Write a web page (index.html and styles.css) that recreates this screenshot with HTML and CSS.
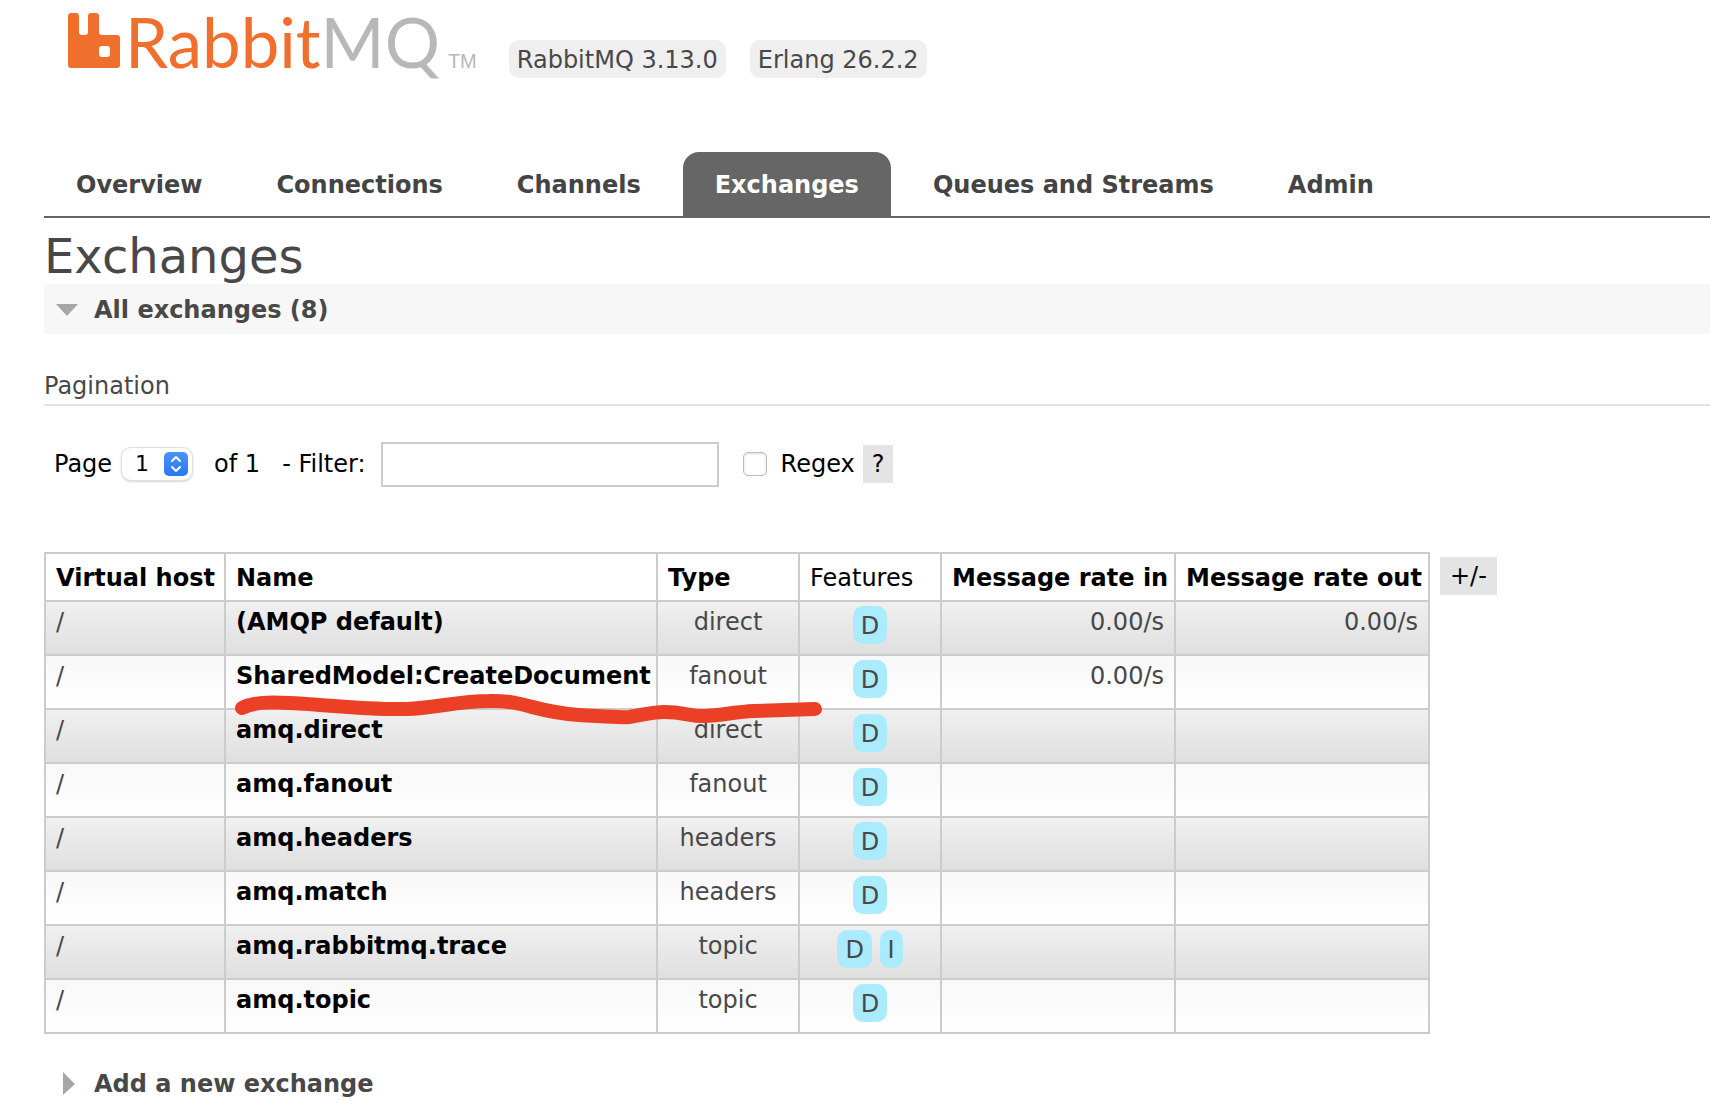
FILE: index.html
```html
<!DOCTYPE html>
<html lang="en">
<head>
<meta charset="utf-8">
<title>RabbitMQ Management</title>
<link rel="stylesheet" href="styles.css">
</head>
<body>
<header class="header">
  <a class="logo" href="#">
    <svg class="logo-mark" viewBox="0 0 52 55" aria-hidden="true"><path fill="#f06f2c" fill-rule="evenodd" d="M3 0H8Q11 0 11 3V19Q11 22 14 22H17Q20 22 20 19V3Q20 0 23 0H28Q31 0 31 3V19Q31 22 34 22H49Q52 22 52 25V52Q52 55 49 55H3Q0 55 0 52V3Q0 0 3 0ZM34 33Q31 33 31 36V41Q31 44 34 44H39Q42 44 42 41V36Q42 33 39 33Z"/></svg>
    <span class="logo-word">Rabbit<span class="logo-mq">MQ</span></span>
    <span class="logo-tm">TM</span>
  </a>
  <div class="versions"><span class="version">RabbitMQ 3.13.0</span><span class="version">Erlang 26.2.2</span></div>
</header>
<nav class="tabs">
  <a class="tab" href="#">Overview</a>
  <a class="tab" href="#">Connections</a>
  <a class="tab" href="#">Channels</a>
  <a class="tab tab-active" href="#">Exchanges</a>
  <a class="tab" href="#">Queues and Streams</a>
  <a class="tab" href="#">Admin</a>
</nav>
<main class="main">
  <h1 class="title">Exchanges</h1>
  <h2 class="section section-open"><svg class="arrow" viewBox="0 0 24 24" aria-hidden="true"><path fill="#a6a6a6" d="M1 6H23L12 18Z"/></svg>All exchanges (8)</h2>
  <h3 class="subhead">Pagination</h3>
  <form class="pager">
    <label for="page">Page</label>
    <span class="picker">
      <select class="page-select" id="page"><option>1</option></select>
      <svg class="picker-icon" viewBox="0 0 24 24" aria-hidden="true"><defs><linearGradient id="blue" x2="0" y2="1"><stop stop-color="#4794fb"/><stop offset="1" stop-color="#2a76f6"/></linearGradient></defs><rect width="24" height="24" rx="5" fill="url(#blue)"/><path d="M8 9L12 5L16 9M8 15L12 19L16 15" fill="none" stroke="#fff" stroke-width="2" stroke-linecap="round" stroke-linejoin="round"/></svg>
    </span>
    <span class="page-count">of 1</span>
    <label class="filter-label" for="filter">- Filter:</label>
    <input class="filter" id="filter" type="text">
    <input class="regex" id="regex" type="checkbox">
    <label class="regex-label" for="regex">Regex</label>
    <button class="chip" type="button">?</button>
  </form>
  <div class="listing">
    <table class="exchanges">
      <colgroup><col class="col-host"><col class="col-name"><col class="col-small"><col class="col-small"><col class="col-in"><col class="col-out"></colgroup>
      <thead><tr><th>Virtual host</th><th>Name</th><th>Type</th><th class="plain">Features</th><th>Message rate in</th><th>Message rate out</th></tr></thead>
      <tbody>
        <tr><td>/</td><td><a class="name" href="#">(AMQP default)</a></td><td class="center">direct</td><td class="flags"><span class="flag">D</span></td><td class="rate">0.00/s</td><td class="rate">0.00/s</td></tr>
        <tr><td>/</td><td><a class="name" href="#">SharedModel:CreateDocument</a></td><td class="center">fanout</td><td class="flags"><span class="flag">D</span></td><td class="rate">0.00/s</td><td></td></tr>
        <tr><td>/</td><td><a class="name" href="#">amq.direct</a></td><td class="center">direct</td><td class="flags"><span class="flag">D</span></td><td></td><td></td></tr>
        <tr><td>/</td><td><a class="name" href="#">amq.fanout</a></td><td class="center">fanout</td><td class="flags"><span class="flag">D</span></td><td></td><td></td></tr>
        <tr><td>/</td><td><a class="name" href="#">amq.headers</a></td><td class="center">headers</td><td class="flags"><span class="flag">D</span></td><td></td><td></td></tr>
        <tr><td>/</td><td><a class="name" href="#">amq.match</a></td><td class="center">headers</td><td class="flags"><span class="flag">D</span></td><td></td><td></td></tr>
        <tr><td>/</td><td><a class="name" href="#">amq.rabbitmq.trace</a></td><td class="center">topic</td><td class="flags"><span class="flag">D</span> <span class="flag">I</span></td><td></td><td></td></tr>
        <tr><td>/</td><td><a class="name" href="#">amq.topic</a></td><td class="center">topic</td><td class="flags"><span class="flag">D</span></td><td></td><td></td></tr>
      </tbody>
    </table>
    <button class="chip" type="button">+/-</button>
    <svg class="marker" viewBox="0 0 600 40" aria-hidden="true"><path d="M8 16C20 10 35 10 55 11C85 12 130 18 173 17C200 16 225 9 255 9C290 8 300 20 345 23C365 24 385 26 395 25C410 23 418 20 430 20C450 20 455 24 469 24C490 23 500 20 520 19L581 17" fill="none" stroke="#ec4026" stroke-width="14" stroke-linecap="round" stroke-linejoin="round"/></svg>
  </div>
  <h2 class="section"><svg class="arrow" viewBox="0 0 24 24" aria-hidden="true"><path fill="#a6a6a6" d="M8 0L20 12L8 23Z"/></svg>Add a new exchange</h2>
</main>
</body>
</html>
```
FILE: styles.css
```css
* { box-sizing: border-box; }
body {
  margin: 0;
  padding-left: 44px;
  background: #fff;
  color: #484848;
  font: 24px/30px Verdana, "DejaVu Sans", sans-serif;
}
a { color: inherit; text-decoration: none; }
h1, h2, h3 { margin: 0; }

.header { display: flex; align-items: flex-start; height: 152px; padding-left: 24px; }
.logo { display: flex; align-items: baseline; height: 92px; font-family: Lato, sans-serif; }
.logo-mark { width: 52px; height: 55px; margin-right: 5px; }
.logo-word { color: #f06f2c; font-size: 69px; line-height: 84px; }
.logo-mq { color: #b8b8b8; }
.logo-tm { color: #b8b8b8; font: 20px/24px "Liberation Sans", sans-serif; margin-left: 8px; }
.versions { display: flex; gap: 24px; margin: 40px 0 0 32px; }
.version { padding: 5px 8px 3px; border-radius: 10px; background: #efefef; }

.tabs { display: flex; gap: 10px; border-bottom: 2px solid #666; }
.tab { padding: 18px 32px 16px; border-radius: 16px 16px 0 0; font-weight: bold; color: #444; white-space: nowrap; }
.tab-active { background: #666; color: #fff; }

.title { padding-top: 10px; font-size: 48px; line-height: 56px; font-weight: normal; }
.section { display: flex; align-items: center; gap: 15px; padding: 11px 11px 9px; width: 100%; font-size: 24px; line-height: 30px; }
.section-open { background: #f7f7f7; }
.arrow { width: 24px; height: 24px; }
.subhead { margin-top: 34px; padding: 3px 0; border-bottom: 2px solid #e4e4e4; font-size: 24px; font-weight: normal; }

.pager { display: flex; align-items: center; height: 46px; margin: 35px 0 0 10px; color: #000; white-space: nowrap; }
.picker { position: relative; display: flex; margin-left: 10px; }
.page-select { appearance: none; width: 70px; height: 32px; padding: 0 13px; border: 0; border-radius: 9px; background: #fff; box-shadow: 0 0 0 1px #e0e0e0, 0 1px 3px #aaa; font: inherit; font-size: 22px; color: #000; }
.picker-icon { position: absolute; right: 4px; top: 4px; width: 24px; height: 24px; pointer-events: none; }
.page-count { margin-left: 22px; }
.filter-label { margin-left: 22px; }
.filter { width: 338px; height: 45px; margin-left: 15px; border: 2px solid #ccc; font: inherit; }
.regex { appearance: none; width: 24px; height: 24px; margin: 0 14px 0 24px; border: 1px solid #bbb; border-radius: 5px; background: #fff; box-shadow: inset 0 1px 3px #ddd; }
.chip { height: 38px; padding: 0 10px; border: 0; background: #e4e4e4; color: #000; font: inherit; }
.pager .chip { margin-left: 8px; padding: 0 9px; }

.listing { position: relative; display: flex; align-items: flex-start; gap: 10px; margin-top: 65px; }
.listing .chip { margin-top: 5px; }
.exchanges { table-layout: fixed; width: 1386px; border-collapse: collapse; }
.exchanges th, .exchanges td { border: 2px solid #ccc; padding: 5px 10px 3px; text-align: left; vertical-align: top; white-space: nowrap; }
.exchanges th { height: 48px; padding: 9px 10px 7px; color: #000; }
.exchanges td { height: 54px; }
.exchanges .plain { font-weight: normal; }
.exchanges .center { text-align: center; }
.exchanges .flags { padding: 4px 10px; text-align: center; }
.exchanges .rate { text-align: right; }
.exchanges tbody td { background: linear-gradient(#f8f8f8, #fff); }
.exchanges tbody tr:nth-child(odd) td { background: linear-gradient(#f0f0f0, #dfdfdf); }
.col-host { width: 180px; }
.col-name { width: 432px; }
.col-small { width: 142px; }
.col-in { width: 234px; }
.col-out { width: 254px; }
.name { color: #000; font-weight: bold; }
.flag { display: inline-block; padding: 5px 8px 3px; border-radius: 10px; background: #aaebfe; }
.marker { position: absolute; left: 190px; top: 140px; width: 600px; height: 40px; pointer-events: none; }
.listing + .section { margin: 24px 0; }
```
